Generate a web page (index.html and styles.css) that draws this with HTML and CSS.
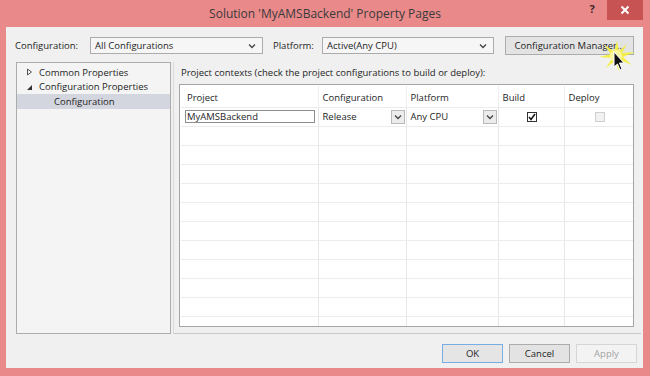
FILE: index.html
```html
<!DOCTYPE html>
<html>
<head>
<meta charset="utf-8">
<title>Property Pages</title>
<link rel="stylesheet" href="styles.css">
</head>
<body>
<div class="window">
  <div class="titlebar">
    <div class="tb-left"></div>
    <div class="title">Solution 'MyAMSBackend' Property Pages</div>
    <div class="tb-buttons">
      <span class="help">?</span>
      <span class="close"><svg width="10" height="10" viewBox="0 0 10 10"><path d="M1.5 1.5 L8.5 8.5 M8.5 1.5 L1.5 8.5" stroke="#fff" stroke-width="2"/></svg></span>
    </div>
  </div>
  <div class="client">
    <div class="toprow">
      <span class="lbl">Configuration:</span>
      <div class="select"><span>All Configurations</span><svg class="chev" width="8" height="6" viewBox="0 0 8 6"><path d="M1 1.5 L4 4.5 L7 1.5" fill="none" stroke="#444" stroke-width="1.3"/></svg></div>
      <span></span>
      <span class="lbl">Platform:</span>
      <div class="select"><span>Active(Any CPU)</span><svg class="chev" width="8" height="6" viewBox="0 0 8 6"><path d="M1 1.5 L4 4.5 L7 1.5" fill="none" stroke="#444" stroke-width="1.3"/></svg></div>
      <span></span>
      <button class="btn btn-cm">Configuration Manager...</button>
    </div>
    <div class="main">
      <div class="tree">
        <div class="node"><svg class="tri" width="7" height="8" viewBox="0 0 7 8"><path d="M1.5 1 L5.5 4 L1.5 7 Z" fill="none" stroke="#555" stroke-width="1"/></svg><span>Common Properties</span></div>
        <div class="node"><svg class="tri" width="7" height="8" viewBox="0 0 7 8"><path d="M6 2 L6 7 L1 7 Z" fill="#333"/></svg><span>Configuration Properties</span></div>
        <div class="node child selected"><span>Configuration</span></div>
      </div>
      <div class="page">
        <div class="caption">Project contexts (check the project configurations to build or deploy):</div>
        <div class="grid">
          <table>
            <colgroup><col class="c1"><col class="c2"><col class="c3"><col class="c4"><col class="c5"></colgroup>
            <tr class="head"><th>Project</th><th>Configuration</th><th>Platform</th><th>Build</th><th>Deploy</th></tr>
            <tr class="data">
              <td><div class="tbox">MyAMSBackend</div></td>
              <td><div class="combo"><span>Release</span><span class="dd"><svg width="8" height="6" viewBox="0 0 8 6"><path d="M1 1.5 L4 4.5 L7 1.5" fill="none" stroke="#444" stroke-width="1.3"/></svg></span></div></td>
              <td><div class="combo"><span>Any CPU</span><span class="dd"><svg width="8" height="6" viewBox="0 0 8 6"><path d="M1 1.5 L4 4.5 L7 1.5" fill="none" stroke="#444" stroke-width="1.3"/></svg></span></div></td>
              <td class="ctr"><span class="chk"><svg width="8" height="8" viewBox="0 0 8 8"><path d="M1 4 L3 6.5 L7 1" fill="none" stroke="#111" stroke-width="1.5"/></svg></span></td>
              <td class="ctr"><span class="chk disabled"></span></td>
            </tr>
            <tr><td></td><td></td><td></td><td></td><td></td></tr>
            <tr><td></td><td></td><td></td><td></td><td></td></tr>
            <tr><td></td><td></td><td></td><td></td><td></td></tr>
            <tr><td></td><td></td><td></td><td></td><td></td></tr>
            <tr><td></td><td></td><td></td><td></td><td></td></tr>
            <tr><td></td><td></td><td></td><td></td><td></td></tr>
            <tr><td></td><td></td><td></td><td></td><td></td></tr>
            <tr><td></td><td></td><td></td><td></td><td></td></tr>
            <tr><td></td><td></td><td></td><td></td><td></td></tr>
            <tr><td></td><td></td><td></td><td></td><td></td></tr>
            <tr><td></td><td></td><td></td><td></td><td></td></tr>
          </table>
        </div>
      </div>
    </div>
    <div class="footer">
      <button class="btn btn-ok">OK</button>
      <button class="btn">Cancel</button>
      <button class="btn btn-disabled">Apply</button>
    </div>
  </div>
  <svg class="cursor" width="40" height="34" viewBox="0 0 40 34">
    <path d="M20 1 L22 11 L30 4 L25 13 L38 12 L26 17 L35 25 L23 20 L22 31 L18 21 L9 28 L15 18 L2 17 L14 14 L7 5 L17 11 Z" fill="#f5ee3a" opacity="0.9"/>
    <circle cx="19" cy="16" r="6" fill="#fbf7a0"/>
    <path d="M17 12 L17 27 L20.5 24 L23 30 L25 29 L22.5 23 L27 23 Z" fill="#111" stroke="#fff" stroke-width="1"/>
  </svg>
</div>
</body>
</html>
```

FILE: styles.css
```css
* { box-sizing: border-box; }
html, body { margin: 0; padding: 0; }
body {
  width: 650px;
  height: 376px;
  overflow: hidden;
  font-family: "Open Sans", "Noto Sans", sans-serif;
  font-size: 9.5px;
  color: #1e1e1e;
  background: #e9898a;
}
.window {
  position: relative;
  width: 650px;
  height: 376px;
  display: flex;
  flex-direction: column;
}
.titlebar {
  height: 27px;
  display: grid;
  grid-template-columns: 1fr auto 1fr;
  align-items: start;
}
.title {
  font-size: 12px;
  color: #3a3a3a;
  line-height: 27px;
}
.tb-buttons {
  display: flex;
  justify-content: flex-end;
  align-items: flex-start;
  padding-right: 7px;
}
.help {
  font-weight: bold;
  font-size: 11px;
  color: #3a2a2a;
  width: 20px;
  line-height: 18px;
  text-align: center;
  margin-right: 5px;
}
.close {
  width: 36px;
  height: 20px;
  background: #c75453;
  display: flex;
  align-items: center;
  justify-content: center;
}
.client {
  flex: 1;
  margin: 0 7px 8px 6px;
  background: #f0f0f0;
  display: flex;
  flex-direction: column;
}
.toprow {
  margin-top: 9px;
  height: 19px;
  display: grid;
  grid-template-columns: 75px 173px 10px 49px 172px 11px 129px;
  align-items: center;
  padding-left: 9px;
}
.lbl { white-space: nowrap; }
.select {
  height: 17px;
  border: 1px solid #acacac;
  background: #f6f6f6;
  display: flex;
  align-items: center;
  justify-content: space-between;
  padding: 0 6px 0 4px;
}
.chev { display: block; }
.btn {
  font-family: inherit;
  font-size: 9.5px;
  color: #1e1e1e;
  background: #e3e3e3;
  border: 1px solid #acacac;
  height: 19px;
  padding: 0;
  margin: 0;
}
.btn-cm { width: 129px; }
.main {
  margin-top: 7px;
  height: 272px;
  display: flex;
  padding-left: 10px;
}
.tree {
  width: 155px;
  height: 272px;
  border: 1px solid #acacac;
  background: #f4f4f4;
  padding-top: 2px;
}
.node {
  height: 14.5px;
  display: flex;
  align-items: center;
  padding-left: 9px;
  white-space: nowrap;
}
.tri { margin-right: 6px; flex: none; }
.node.child { padding-left: 37px; }
.node.selected { background: #d3d5df; }
.page {
  margin-left: 2px;
  width: 468px;
  height: 272px;
  border-left: 1px solid #dadada;
  border-bottom: 1px solid #c8c8c8;
  padding-left: 5px;
}
.caption {
  height: 22px;
  line-height: 20px;
  padding-left: 2px;
  padding-top: 1px;
  white-space: nowrap;
}
.grid {
  width: 455px;
  height: 243px;
  border: 1px solid #a5a5a5;
  background: #fff;
  overflow: hidden;
  padding: 1px 0 0 1px;
}
table {
  border-collapse: collapse;
  table-layout: fixed;
  width: 452px;
}
col.c1 { width: 137px; }
col.c2 { width: 88px; }
col.c3 { width: 92px; }
col.c4 { width: 66px; }
col.c5 { width: 69px; }
th, td {
  border-right: 1px solid #e6e6e6;
  border-bottom: 1px solid #ececec;
  height: 19px;
  padding: 0;
  font-weight: normal;
  text-align: left;
  white-space: nowrap;
}
th:last-child, td:last-child { border-right: none; }
tr.head th {
  height: 21px;
  padding-left: 4px;
  padding-top: 2px;
  border-right-color: #eeeeee;
}
tr.head th:first-child { padding-left: 6px; }
tr.data td { height: 19px; padding: 0 1px 0 3px; }
tr.data td:first-child { padding-left: 4px; }
.tbox {
  height: 13px;
  border: 1px solid #8e8e8e;
  line-height: 11px;
  padding-left: 1px;
  width: 130px;
}
.combo {
  display: flex;
  align-items: center;
  justify-content: space-between;
  height: 15px;
  padding-left: 1px;
}
.dd {
  width: 14px;
  height: 14px;
  border: 1px solid #b9b9b9;
  background: #ececec;
  display: flex;
  align-items: center;
  justify-content: center;
}
.ctr { text-align: center; }
td.ctr { padding: 0; }
.chk {
  display: inline-flex;
  width: 10px;
  height: 10px;
  border: 1px solid #333;
  background: #fff;
  align-items: center;
  justify-content: center;
  vertical-align: middle;
}
.chk.disabled {
  border-color: #cfcfcf;
  background: #f2f2f2;
}
.footer {
  margin-top: 10px;
  display: flex;
  justify-content: flex-end;
  gap: 6px;
  padding-right: 6px;
}
.footer .btn { width: 61px; height: 19px; }
.btn-ok { border-color: #78aee5; background: #e5e5e5; }
.btn-disabled { color: #a3a3a3; background: #f3f3f3; border-color: #d6d6d6; }
.cursor {
  position: absolute;
  left: 597px;
  top: 40px;
}
```
